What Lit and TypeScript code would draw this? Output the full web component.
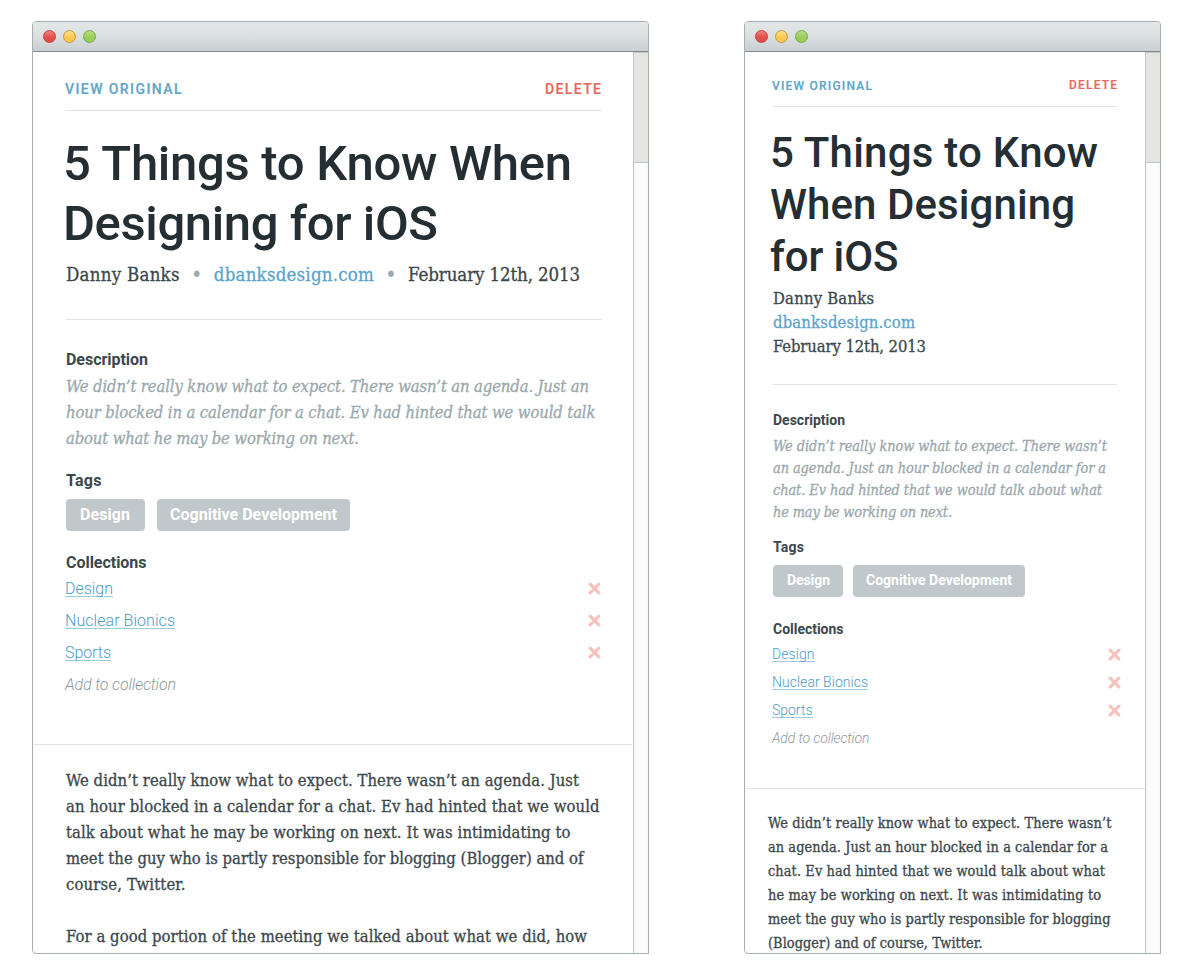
import { LitElement, html, css, svg } from "lit";
import { customElement, property, state, query } from "lit/decorators.js";
import { styleMap } from "lit/directives/style-map.js";

type Line = [text: string, width: number];

interface Article {
  compact: boolean;
  view: Line;
  remove: Line;
  title: Line[];
  meta: Line[];
  labels: Line[];
  description: Line[];
  tags: Line[];
  collections: Line[];
  add: Line;
  body: Line[][];
}

const WIDE: Article = {
  compact: false,
  view: ["VIEW ORIGINAL", 116.5],
  remove: ["DELETE", 56],
  title: [["5 Things to Know When", 509], ["Designing for iOS", 375]],
  meta: [["Danny Banks", 113.5], ["dbanksdesign.com", 160], ["February 12th, 2013", 172]],
  labels: [["Description", 82], ["Tags", 35.5], ["Collections", 80.5]],
  description: [
    ["We didn’t really know what to expect. There wasn’t an agenda. Just an", 523],
    ["hour blocked in a calendar for a chat. Ev had hinted that we would talk", 529.5],
    ["about what he may be working on next.", 293],
  ],
  tags: [["Design", 50], ["Cognitive Development", 167]],
  collections: [["Design", 48], ["Nuclear Bionics", 110], ["Sports", 46]],
  add: ["Add to collection", 111],
  body: [
    [
      ["We didn’t really know what to expect. There wasn’t an agenda. Just", 513],
      ["an hour blocked in a calendar for a chat. Ev had hinted that we would", 533.5],
      ["talk about what he may be working on next. It was intimidating to", 504.5],
      ["meet the guy who is partly responsible for blogging (Blogger) and of", 517.5],
      ["course, Twitter.", 119.5],
    ],
    [["For a good portion of the meeting we talked about what we did, how", 521]],
  ],
};

const NARROW: Article = {
  compact: true,
  view: ["VIEW ORIGINAL", 100],
  remove: ["DELETE", 48],
  title: [["5 Things to Know", 328], ["When Designing", 305], ["for iOS", 128.5]],
  meta: [["Danny Banks", 101], ["dbanksdesign.com", 142], ["February 12th, 2013", 153]],
  labels: [["Description", 72], ["Tags", 31], ["Collections", 70.5]],
  description: [
    ["We didn’t really know what to expect. There wasn’t", 334],
    ["an agenda. Just an hour blocked in a calendar for a", 333],
    ["chat. Ev had hinted that we would talk about what", 329],
    ["he may be working on next.", 179],
  ],
  tags: [["Design", 43], ["Cognitive Development", 146]],
  collections: [["Design", 42.5], ["Nuclear Bionics", 96], ["Sports", 40.5]],
  add: ["Add to collection", 97.5],
  body: [
    [
      ["We didn’t really know what to expect. There wasn’t", 343.5],
      ["an agenda. Just an hour blocked in a calendar for a", 340],
      ["chat. Ev had hinted that we would talk about what", 337],
      ["he may be working on next. It was intimidating to", 333],
      ["meet the guy who is partly responsible for blogging", 342.5],
      ["(Blogger) and of course, Twitter.", 214.5],
    ],
  ],
};

/** One line of copy, tracked so that it fills a given measure. */
@customElement("fit-line")
export class FitLine extends LitElement {
  @property() text = "";
  @property({ type: Number }) measure = 0;
  @state() private tracking = 0;
  @query("span") private span!: HTMLSpanElement;

  static styles = css`
    :host { display: block; white-space: nowrap; }
  `;

  firstUpdated() {
    const natural = this.span.getBoundingClientRect().width;
    this.tracking = (this.measure - natural) / (this.text.length - 1);
  }

  render() {
    return html`<span style=${styleMap({ letterSpacing: `${this.tracking}px` })}>${this.text}</span>`;
  }
}

const fit = ([text, width]: Line) =>
  html`<fit-line style=${styleMap({ width: `${width}px` })} .text=${text} .measure=${width}></fit-line>`;

const cross = svg`<path d="M2.2 2.2 L10.8 10.8 M10.8 2.2 L2.2 10.8" fill="none" stroke="#f6c3bc" stroke-width="3.3" stroke-linecap="round"/>`;

@customElement("article-window")
export class ArticleWindow extends LitElement {
  @property({ attribute: false }) article!: Article;
  @property({ type: Boolean, reflect: true }) compact = false;

  static styles = css`
    :host {
      --left: 33px; --right: 31px;
      --head: 58px; --head-top: 27px; --head-size: 14px; --delete-top: 27px; --delete-right: 1px;
      --title: 49px; --title-lh: 60px; --title-top: 23px;
      --meta: 18.5px; --meta-lh: 26px; --meta-top: 8px; --meta-bottom: 31px;
      --label: 16px; --label-top: 30px;
      --desc: 16.5px; --desc-lh: 26px; --desc-top: 4px;
      --tags-top: 19px; --pills-top: 8px; --pill-gap: 12px; --first-right: 15px;
      --col-top: 22px; --items-top: 0px; --item: 16px; --item-lh: 32px; --col-bottom: 43px;
      --link: 17px; --link-line: 17.5px; --link-bottom: 1px; --x-top: -2px; --x-right: 1px;
      --body: 16.5px; --body-lh: 26px; --body-top: 23px; --body-left: 33px; --body-right: 1px;
      display: flex;
      flex-direction: column;
      box-sizing: border-box;
      width: 617px;
      height: 933px;
      border: 1px solid #a7afb2;
      border-radius: 4px 4px 0 4px;
      overflow: hidden;
      background: #fff;
      font-family: Roboto, sans-serif;
      color: #3c474b;
    }
    :host([compact]) {
      --left: 28px; --right: 28px;
      --head: 54px; --head-top: 24px; --head-size: 12px; --delete-top: 23px; --delete-right: 0px;
      --title: 42px; --title-lh: 52px; --title-top: 20px;
      --meta: 16.5px; --meta-lh: 24px; --meta-top: 4px; --meta-bottom: 25px;
      --label: 14px; --label-top: 25px;
      --desc: 14.4px; --desc-lh: 22px; --desc-top: 5px;
      --tags-top: 14px; --pills-top: 8px; --pill-gap: 10px; --first-right: 13px;
      --col-top: 22px; --items-top: 1px; --item: 14px; --item-lh: 28px; --col-bottom: 36px;
      --link: 16px; --link-line: 16px; --link-bottom: 0px; --x-top: 0px; --x-right: -4px;
      --body: 14.4px; --body-lh: 24px; --body-top: 22px; --body-left: 23px; --body-right: 0px;
      width: 417px;
    }
    .bar {
      flex: none;
      box-sizing: border-box;
      height: 30px;
      padding: 8px 10px;
      display: flex;
      gap: 7px;
      background: linear-gradient(#e3e7e8, #dadfe0 50%, #c9cfd2);
      border-bottom: 1px solid #7e8a8f;
    }
    .light { box-sizing: border-box; width: 13px; height: 13px; border-radius: 50%; border: 1px solid; }
    .red { border-color: #c93c3a; background: linear-gradient(#ee8580, #e2504c 55%, #e04a48); }
    .yellow { border-color: #c39a3c; background: linear-gradient(#ffdc8c, #fdc851 60%, #fdc54e); }
    .green { border-color: #74a844; background: linear-gradient(#b8dd85, #98cd58 60%, #9bd15b); }
    .view { flex: 1; min-height: 0; display: flex; }
    .page { flex: 1; min-width: 0; overflow: hidden; }
    .scroll {
      flex: none;
      box-sizing: border-box;
      width: 15px;
      border-left: 1px solid #c0c7ca;
      background: linear-gradient(90deg, #f5f5f3, #fcfcfa 30%, #fcfcfa 70%, #f7f7f5);
    }
    .thumb {
      box-sizing: border-box;
      height: 111px;
      background: #e4e4e0;
      border: solid #c0c8cc;
      border-width: 1px 0;
    }
    .details { padding: 0 var(--right) 0 var(--left); }
    .head {
      display: flex;
      justify-content: space-between;
      box-sizing: border-box;
      height: calc(var(--head) + 1px);
      border-bottom: 1px solid #e2e3df;
      font-size: var(--head-size);
      font-weight: 500;
      line-height: 20px;
      -webkit-text-stroke: 0.2px;
    }
    .original { margin: var(--head-top) 0 0 -1px; color: #62a6c8; }
    .delete { margin: var(--delete-top) var(--delete-right) 0 0; color: #e66a5c; }
    h1 {
      margin: var(--title-top) 0 0 -3px;
      font-size: var(--title);
      line-height: var(--title-lh);
      font-weight: 500;
      color: #242e33;
    }
    .serif {
      font-family: "DejaVu Serif Condensed", "DejaVu Serif", serif;
      font-stretch: condensed;
      -webkit-text-stroke: 0.3px;
    }
    .meta {
      display: flex;
      margin-top: var(--meta-top);
      padding-bottom: var(--meta-bottom);
      border-bottom: 1px solid #e2e4e5;
      font-size: var(--meta);
      line-height: var(--meta-lh);
    }
    :host([compact]) .meta { flex-direction: column; }
    .dot { width: 34.3px; text-align: center; color: #9caaae; -webkit-text-stroke: 0.8px; }
    .site { color: #5ba4cb; }
    h2 { margin: 0; font-size: var(--label); line-height: 20px; font-weight: 700; }
    .label-desc { margin-top: var(--label-top); }
    .label-tags { margin-top: var(--tags-top); }
    .label-col { margin-top: var(--col-top); }
    .desc {
      margin-top: var(--desc-top);
      font-size: var(--desc);
      line-height: var(--desc-lh);
      font-style: italic;
      color: #9ba8ad;
    }
    .pills { display: flex; gap: var(--pill-gap); margin-top: var(--pills-top); }
    .pill {
      padding: 0 13px;
      height: 32px;
      line-height: 31px;
      border-radius: 4px;
      background: #c1c8cb;
      color: #fff;
      font-size: var(--label);
      font-weight: 700;
    }
    .pill:first-child { padding: 0 var(--first-right) 0 14px; }
    .items {
      margin: var(--items-top) 0 0 -1px;
      padding-bottom: var(--col-bottom);
      font-size: var(--item);
      line-height: var(--item-lh);
      font-weight: 300;
    }
    .item { display: flex; justify-content: space-between; align-items: center; height: var(--item-lh); }
    .link {
      box-sizing: border-box;
      height: var(--link);
      margin-bottom: var(--link-bottom);
      color: #4c9cc6;
      line-height: var(--link-line);
      border-bottom: 1px solid #9ccbe1;
    }
    .x { width: 13px; height: 13px; margin: var(--x-top) var(--x-right) 0 0; }
    .add { font-style: italic; color: #8d999e; }
    .body {
      margin: 0 var(--body-right) 0 1px;
      padding: var(--body-top) 0 0 calc(var(--body-left) - 1px);
      border-top: 1px solid #e0e3e4;
      font-size: var(--body);
      line-height: var(--body-lh);
    }
    .para { margin-bottom: var(--body-lh); }
  `;

  render() {
    const a = this.article;
    return html`
      <div class="bar">
        <i class="light red"></i><i class="light yellow"></i><i class="light green"></i>
      </div>
      <div class="view">
        <div class="page">
          <div class="details">
            <div class="head">
              <div class="original">${fit(a.view)}</div>
              <div class="delete">${fit(a.remove)}</div>
            </div>
            <h1>${a.title.map(fit)}</h1>
            <div class="meta serif">
              ${a.meta.map(
                (m, i) => html`
                  ${i && !a.compact ? html`<span class="dot">•</span>` : ""}
                  <div class=${i === 1 ? "site" : ""}>${fit(m)}</div>
                `
              )}
            </div>
            <h2 class="label-desc">${fit(a.labels[0])}</h2>
            <div class="desc serif">${a.description.map(fit)}</div>
            <h2 class="label-tags">${fit(a.labels[1])}</h2>
            <div class="pills">${a.tags.map((t) => html`<div class="pill">${fit(t)}</div>`)}</div>
            <h2 class="label-col">${fit(a.labels[2])}</h2>
            <div class="items">
              ${a.collections.map(
                (c) => html`
                  <div class="item">
                    <div class="link">${fit(c)}</div>
                    <svg class="x" viewBox="0 0 13 13">${cross}</svg>
                  </div>
                `
              )}
              <div class="item add">${fit(a.add)}</div>
            </div>
          </div>
          <div class="body serif">${a.body.map((p) => html`<div class="para">${p.map(fit)}</div>`)}</div>
        </div>
        <div class="scroll"><div class="thumb"></div></div>
      </div>
    `;
  }
}

@customElement("app-root")
export class AppRoot extends LitElement {
  static styles = css`
    :host {
      display: flex;
      justify-content: space-between;
      align-items: flex-start;
      box-sizing: border-box;
      height: 975px;
      padding: 21px 39px 0 32px;
      background: #fff;
      overflow: hidden;
    }
  `;

  render() {
    return html`
      <article-window .article=${WIDE}></article-window>
      <article-window compact .article=${NARROW}></article-window>
    `;
  }
}
